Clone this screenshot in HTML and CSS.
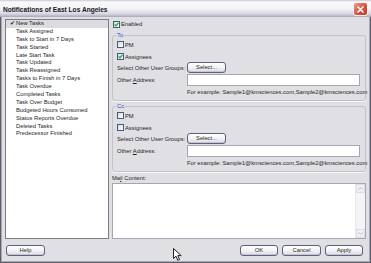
FILE: index.html
```html
<!DOCTYPE html>
<html lang="en">
<head>
    <meta charset="UTF-8">
    <title>Notifications of East Los Angeles</title>
    <link rel="stylesheet" href="styles.css">
</head>
<body>
    <div class="window">
        <div class="titlebar">
            <span class="title">Notifications of East Los Angeles</span>
            <span class="close">
                <svg width="7" height="7" viewBox="0 0 7 7"><path d="M1 1L6 6M6 1L1 6" stroke="#fff" stroke-width="1.6" stroke-linecap="round"/></svg>
            </span>
        </div>
        <div class="main">
            <ul class="events">
                <li class="selected"><span class="tick">&#10004;</span>New Tasks</li>
                <li>Task Assigned</li>
                <li>Task to Start in 7 Days</li>
                <li>Task Started</li>
                <li>Late Start Task</li>
                <li>Task Updated</li>
                <li>Task Reassigned</li>
                <li>Tasks to Finish in 7 Days</li>
                <li>Task Overdue</li>
                <li>Completed Tasks</li>
                <li>Task Over Budget</li>
                <li>Budgeted Hours Consumed</li>
                <li>Status Reports Overdue</li>
                <li>Deleted Tasks</li>
                <li>Predecessor Finished</li>
            </ul>
            <div class="settings">
                <div class="check-row enabled"><span class="cb checked"><svg width="5" height="5" viewBox="0 0 5 5"><path d="M0.6 2.4L2 3.8L4.4 0.9" fill="none" stroke="#21a121" stroke-width="1.2"/></svg></span>Enabled</div>

                <fieldset class="group">
                    <legend>To</legend>
                    <div class="check-row"><span class="cb"></span>PM</div>
                    <div class="check-row second"><span class="cb checked"><svg width="5" height="5" viewBox="0 0 5 5"><path d="M0.6 2.4L2 3.8L4.4 0.9" fill="none" stroke="#21a121" stroke-width="1.2"/></svg></span>Assignees</div>
                    <div class="field-row"><span class="field-label">Select Other User Groups:</span><button class="btn select">Select...</button></div>
                    <div class="field-row address"><span class="field-label">Other <u>A</u>ddress:</span><span class="input"></span></div>
                    <div class="hint">For example: Sample1@kmsciences.com,Sample2@kmsciences.com</div>
                </fieldset>

                <fieldset class="group">
                    <legend>Cc</legend>
                    <div class="check-row"><span class="cb"></span>PM</div>
                    <div class="check-row second"><span class="cb"></span>Assignees</div>
                    <div class="field-row"><span class="field-label">Select Other User Groups:</span><button class="btn select">Select...</button></div>
                    <div class="field-row address"><span class="field-label">Other <u>A</u>ddress:</span><span class="input"></span></div>
                    <div class="hint">For example: Sample1@kmsciences.com,Sample2@kmsciences.com</div>
                </fieldset>

                <div class="mail-label">Ma<u>i</u>l Content:</div>
                <div class="mail">
                    <div class="mail-text"></div>
                    <div class="scrollbar">
                        <span class="arrow"><svg width="5" height="3" viewBox="0 0 5 3"><path d="M0.5 2.5L2.5 0.5L4.5 2.5" fill="none" stroke="#b9bcc6" stroke-width="1"/></svg></span>
                        <span class="track"></span>
                        <span class="arrow"><svg width="5" height="3" viewBox="0 0 5 3"><path d="M0.5 0.5L2.5 2.5L4.5 0.5" fill="none" stroke="#b9bcc6" stroke-width="1"/></svg></span>
                    </div>
                </div>
            </div>
        </div>
        <div class="footer">
            <button class="btn help">Help</button>
            <div class="actions">
                <button class="btn ok">OK</button>
                <button class="btn cancel">Cancel</button>
                <button class="btn apply">Apply</button>
            </div>
        </div>
        <svg class="cursor" width="9" height="13" viewBox="0 0 9 13">
            <path d="M0.5 0.5V10.5L3 8.2L4.8 12.3L6.5 11.5L4.8 7.6H8.2Z" fill="#fff" stroke="#222" stroke-width="1"/>
        </svg>
    </div>
</body>
</html>
```

FILE: styles.css
```css
body {
    margin: 0;
    font-family: "Liberation Sans", Arial, sans-serif;
    font-size: 5.8px;
    color: #1e1e1e;
    background: #e0e0e4;
}
.window {
    position: relative;
    width: 371px;
    height: 263px;
    display: flex;
    flex-direction: column;
    background: #e0e0e4;
    box-shadow: inset 0 0 0 1px #5e5e6a, inset 0 0 0 2px #a9a9b6;
    box-sizing: border-box;
}
.titlebar {
    height: 17px;
    display: flex;
    align-items: center;
    justify-content: space-between;
    padding: 0 3px 0 3px;
    box-sizing: border-box;
    background: linear-gradient(#c9c9d3 0, #fbfbfd 2px, #f2f2f6 9px, #d6d6e0 14px, #a6a6b8 17px);
}
.title {
    font-size: 6.6px;
    font-weight: bold;
    color: #151515;
    padding-top: 1px;
}
.close {
    width: 15px;
    height: 14px;
    display: flex;
    align-items: center;
    justify-content: center;
    border: 1px solid #f4f4f4;
    border-radius: 3px;
    box-sizing: border-box;
    background: linear-gradient(135deg, #ef9a86, #d2503e 60%, #c13d2d);
    margin-top: 1px;
}
.main {
    display: flex;
    gap: 3px;
    padding: 2px 0 0 5px;
}
.events {
    list-style: none;
    margin: 0;
    padding: 0;
    width: 104px;
    height: 220px;
    border: 1px solid #7d7d86;
    box-sizing: border-box;
    background: #fff;
}
.events li {
    height: 7.9px;
    line-height: 7.9px;
    padding-left: 10px;
    white-space: nowrap;
}
.events li.selected {
    padding-left: 4px;
    background: #dcdce0;
}
.tick {
    display: inline-block;
    width: 6px;
    font-size: 6px;
}
.settings {
    width: 254px;
    display: flex;
    flex-direction: column;
}
.check-row {
    height: 11px;
    display: flex;
    align-items: center;
}
.check-row.enabled {
    height: 10px;
    padding-left: 1px;
}
.check-row.second {
    margin-top: 1px;
}
.cb {
    width: 7px;
    height: 7px;
    margin-right: 1px;
    border: 1px solid #3d5d82;
    box-sizing: border-box;
    background: linear-gradient(135deg, #dcdcd6, #fdfdfd);
    display: flex;
    align-items: center;
    justify-content: center;
}
.group {
    margin: 2px 0 0 0;
    padding: 0 4px 4px 4px;
    border: 1px solid #c2c2c8;
    border-radius: 3px;
    box-shadow: 0 1px 0 #f6f6f8;
    min-width: 0;
}
.group + .group {
    margin-top: 1px;
}
.group legend {
    height: 8px;
    line-height: 8px;
    padding: 0 1px;
    margin-left: -1px;
    color: #1b4fc4;
}
.field-row {
    height: 11px;
    display: flex;
    align-items: center;
}
.field-row.address {
    height: 12px;
    margin-top: 1px;
}
.field-label {
    width: 70px;
    flex: none;
    white-space: nowrap;
}
.btn {
    font-family: inherit;
    font-size: 5.8px;
    color: #1e1e1e;
    height: 11px;
    padding: 0;
    border: 1px solid #5d6278;
    border-radius: 3px;
    background: linear-gradient(#ffffff, #f1f1f4 55%, #d9d9e2);
    box-shadow: inset 0 -1px 0 #c6c6d2;
    line-height: 9px;
}
.select {
    width: 39px;
}
.input {
    flex: 1;
    height: 12px;
    border: 1px solid #a3a7b4;
    box-sizing: border-box;
    background: #fff;
    margin-right: 1px;
}
.hint {
    height: 8px;
    line-height: 8px;
    margin-top: 2px;
    padding-left: 70px;
    white-space: nowrap;
}
.mail-label {
    height: 8px;
    line-height: 8px;
    margin-top: 2px;
}
.mail {
    margin-top: 1px;
    height: 56px;
    display: flex;
    border: 1px solid #a3a7b4;
    box-sizing: border-box;
    background: #fff;
}
.mail-text {
    flex: 1;
}
.scrollbar {
    width: 9px;
    display: flex;
    flex-direction: column;
    background: #f4f4f6;
    border-left: 1px solid #eaeaee;
}
.arrow {
    height: 9px;
    display: flex;
    align-items: center;
    justify-content: center;
    background: #f0f0f4;
    border: 1px solid #dcdde4;
    box-sizing: border-box;
}
.track {
    flex: 1;
}
.footer {
    display: flex;
    justify-content: space-between;
    padding: 6px 8px 0 6px;
}
.help {
    width: 39px;
}
.actions {
    display: flex;
    gap: 4px;
}
.ok, .apply {
    width: 38px;
}
.cancel {
    width: 39px;
}
.cursor {
    position: absolute;
    left: 173px;
    top: 248px;
}
```
